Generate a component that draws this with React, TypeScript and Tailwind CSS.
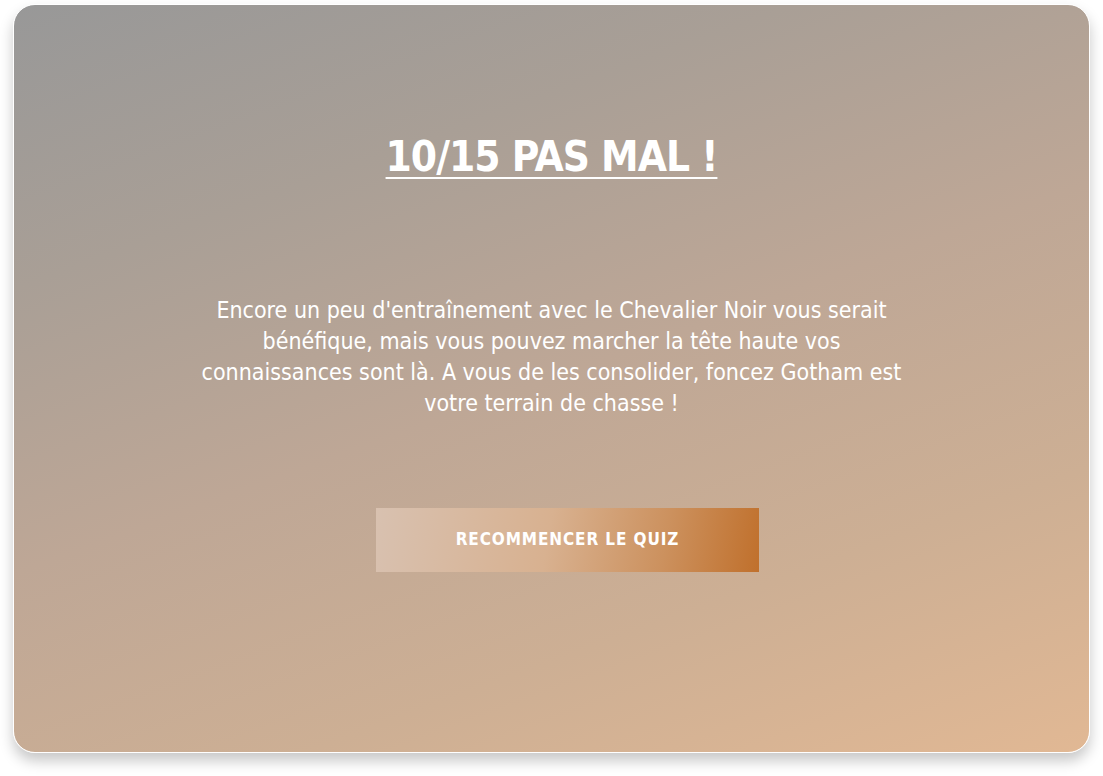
import React from "react";

const font = { fontFamily: '"DejaVu Sans Condensed", "Roboto", sans-serif' };

export default function App() {
  return (
    <div className="w-[1103px] h-[776px] bg-white pt-[4px] pl-[13px]" style={font}>
      <div className="w-[1077px] h-[749px] rounded-[22px] border border-white shadow-[0_8px_14px_rgba(0,0,0,0.22)] bg-[linear-gradient(160deg,#989898_0%,#a99f96_25%,#bea796_50%,#cdaf94_75%,#e1b894_100%)] flex flex-col items-center">
        <h1 className="mt-[126px] text-[42px] leading-[52px] font-bold text-white underline decoration-[2px] underline-offset-[6px] tracking-[-1px]">
          10/15 PAS MAL !
        </h1>
        <p className="mt-[112px] w-[720px] text-center text-[23px] leading-[31px] text-white">
          Encore un peu d'entraînement avec le Chevalier Noir vous serait bénéfique, mais vous pouvez marcher la tête haute vos connaissances sont là. A vous de les consolider, foncez Gotham est votre terrain de chasse !
        </p>
        <button className="mt-[89px] w-[383px] h-[64px] ml-[32px] bg-[linear-gradient(100deg,#d8c1b0_0%,#d8b190_45%,#cc915e_75%,#c0702c_100%)] text-white font-bold text-[17px] tracking-[0.9px]">
          RECOMMENCER LE QUIZ
        </button>
      </div>
    </div>
  );
}
